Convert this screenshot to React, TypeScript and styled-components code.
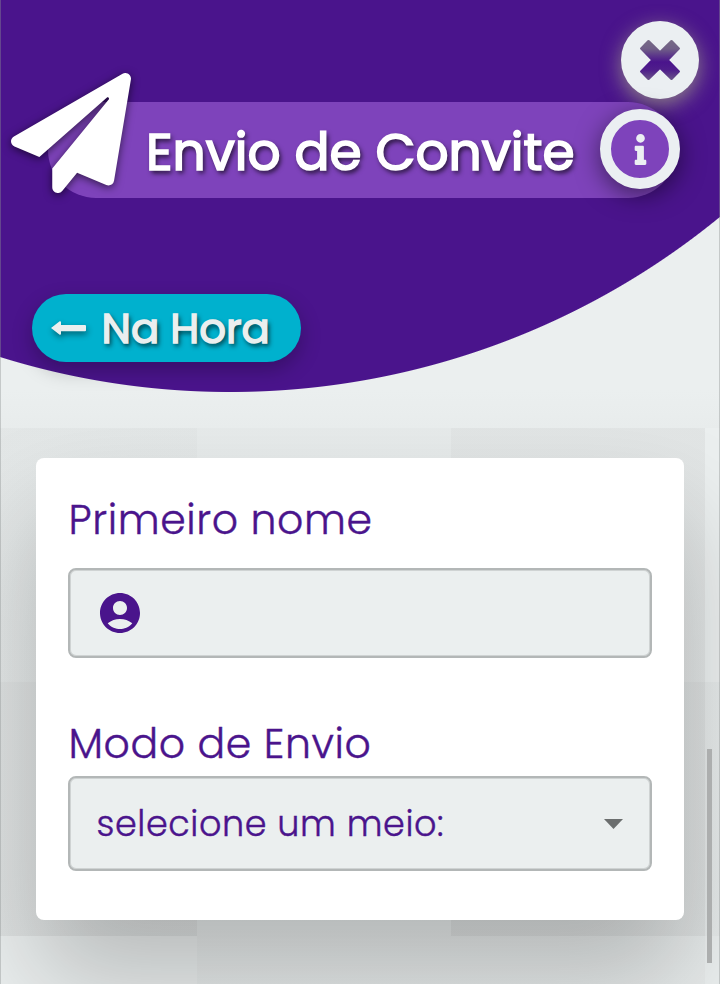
import React from "react";
import styled, { createGlobalStyle } from "styled-components";
import { FaPaperPlane, FaInfo } from "react-icons/fa";
import { MdAccountCircle } from "react-icons/md";

const GlobalStyle = createGlobalStyle`
  * { box-sizing: border-box; }
  html, body { margin: 0; padding: 0; }
  body { background: #ebefef; overflow: hidden; }
`;

const Page = styled.div`
  position: relative;
  display: flex;
  flex-direction: column;
  width: 720px;
  height: 984px;
  overflow: hidden;
  background: #ebefef;
  color: #4a148c;
  font-family: Poppins, Inter, "Open Sans", sans-serif;
`;

const EdgeLines = styled.div`
  position: absolute;
  inset: 0;
  z-index: 2;
  border: solid rgba(140, 145, 145, 0.4);
  border-width: 0 1px;
  pointer-events: none;
`;

const Header = styled.header`
  position: relative;
  z-index: 1;
  flex: none;
  display: flex;
  flex-direction: column;
  height: 428px;
  padding: 21px 21px 0 32px;
  background: radial-gradient(circle at 230px -381px, #4a148c 772.5px, rgba(74, 20, 140, 0) 773.5px),
    linear-gradient(#ebefef 390px, #e8ecec 428px);
`;

const CloseButton = styled.button`
  align-self: flex-end;
  display: grid;
  place-items: center;
  width: 78px;
  height: 78px;
  padding: 0;
  border: 0;
  border-radius: 50%;
  background: #ebeff2;
  box-shadow: 0 6px 20px rgba(165, 165, 135, 0.75);
`;

const TitleBar = styled.div`
  position: relative;
  display: flex;
  align-items: center;
  height: 96px;
  margin: 3px 23px 0 16px;
  border-radius: 48px;
  background: #7e43bb;
`;

const PlaneIcon = styled(FaPaperPlane)`
  flex: none;
  width: 120px;
  height: 120px;
  margin: -35px 1px 0 -37.5px;
  color: #fff;
  filter: drop-shadow(0 2px 4px rgba(0, 0, 0, 0.6));
`;

const Title = styled.h1`
  flex: 1;
  margin: 4px 0 0 14.5px;
  font-size: 51.8px;
  font-weight: 400;
  line-height: 96px;
  white-space: nowrap;
  color: #fff;
  -webkit-text-stroke: 1.7px #fff;
  text-shadow: 2px 3px 5px rgba(0, 0, 0, 0.8);
`;

const InfoButton = styled.button`
  flex: none;
  display: grid;
  place-items: center;
  width: 80px;
  height: 80px;
  margin-top: -2px;
  margin-right: -4px;
  padding: 0;
  border: 11px solid #ebeff2;
  border-radius: 50%;
  background: #7e43bb;
  color: #ebeff2;
  box-shadow: 0 6px 24px rgba(0, 0, 0, 0.5);
`;

const BackButton = styled.button`
  display: flex;
  align-items: center;
  width: 269px;
  height: 68px;
  margin-top: 96px;
  padding: 0 0 0 19px;
  gap: 15.5px;
  border: 0;
  border-radius: 34px;
  background: #00b1ce;
  color: #ebefef;
  font: inherit;
  font-size: 41.8px;
  font-weight: 400;
  line-height: 68px;
  white-space: nowrap;
  -webkit-text-stroke: 1.5px #ebefef;
  text-shadow: 2px 3px 5px rgba(0, 0, 0, 0.8);
  box-shadow: 0 8px 20px rgba(0, 0, 0, 0.26);

  svg { flex: none; filter: drop-shadow(1px 3px 3px rgba(0, 0, 0, 0.45)); }
`;

const BackLabel = styled.span`
  padding-top: 2px;
`;

const Content = styled.main`
  position: relative;
  flex: 1;
  padding: 30px 36px 0;
  overflow: hidden;
  background:
    linear-gradient(rgba(0, 0, 0, 0.02), rgba(0, 0, 0, 0.02)) 0 0 / 197px 508px no-repeat,
    linear-gradient(rgba(0, 0, 0, 0.022), rgba(0, 0, 0, 0.022)) 451px 0 / 254px 508px no-repeat,
    linear-gradient(rgba(0, 0, 0, 0.022), rgba(0, 0, 0, 0.022)) 0 254px / 197px 254px no-repeat,
    linear-gradient(rgba(0, 0, 0, 0.022), rgba(0, 0, 0, 0.022)) 451px 254px / 269px 254px no-repeat,
    linear-gradient(rgba(0, 0, 0, 0.018), rgba(0, 0, 0, 0.018)) 197px 0 / 508px 556px no-repeat,
    linear-gradient(rgba(0, 0, 0, 0.015), rgba(0, 0, 0, 0.015)) 0 0 / 197px 508px no-repeat,
    #ebefef;
`;

const Card = styled.form`
  display: flex;
  flex-direction: column;
  height: 462px;
  padding: 32px;
  border-radius: 8px;
  background: #fff;
  box-shadow: 0 60px 104px rgba(0, 0, 0, 0.22);
`;

const Label = styled.label`
  padding-left: 0.5px;
  font-size: 41px;
  font-weight: 300;
  line-height: 59px;
  height: 60px;
  letter-spacing: 0.6px;
  white-space: nowrap;
  -webkit-text-stroke: 0.4px currentColor;
`;

const Field = styled.div<{ $height: number; $top: number; $bottom: number }>`
  flex: none;
  display: flex;
  align-items: center;
  justify-content: space-between;
  height: ${(p) => p.$height}px;
  margin-top: ${(p) => p.$top}px;
  margin-bottom: ${(p) => p.$bottom}px;
  padding: 0 27px 0 26px;
  border: 2px solid #b3b7b7;
  border-radius: 8px;
  background: #ebefef;
  box-shadow: inset 0 0 0 1px rgba(179, 183, 183, 0.5);
`;

const SelectText = styled.span`
  padding-left: 0.5px;
  font-size: 35px;
  font-weight: 300;
  letter-spacing: 0.6px;
  white-space: nowrap;
  -webkit-text-stroke: 0.4px currentColor;
`;

const ScrollThumb = styled.div`
  position: absolute;
  top: 749px;
  left: 707px;
  z-index: 2;
  width: 5px;
  height: 214px;
  background: #acaeae;
`;

const CloseIcon = () => (
  <svg width="40" height="40" viewBox="0 0 40 40" overflow="visible">
    <defs>
      <linearGradient id="closeShade" gradientUnits="userSpaceOnUse" x1="20" y1="0" x2="20" y2="40">
        <stop offset="0" stopColor="#776b86" />
        <stop offset="0.22" stopColor="#705f87" />
        <stop offset="0.38" stopColor="#5d398a" />
        <stop offset="0.55" stopColor="#4a148c" />
        <stop offset="0.75" stopColor="#4f1e8b" />
        <stop offset="1" stopColor="#6a5488" />
      </linearGradient>
    </defs>
    <path
      d="M8.5 1.2 20 12.4 31.5 1.2 38.8 8.5 27.6 20 38.8 31.5 31.5 38.8 20 27.6 8.5 38.8 1.2 31.5 12.4 20 1.2 8.5Z"
      fill="url(#closeShade)"
      stroke="url(#closeShade)"
      strokeWidth="2.4"
      strokeLinejoin="round"
    />
  </svg>
);

const ArrowIcon = () => (
  <svg width="35" height="14" viewBox="0 0 35 14">
    <path d="M0 7 8.7.3Q10 0 10 1.2V3.9H34Q35 3.9 35 5V9.2Q35 10.2 34 10.2H10V12.8Q10 14 8.7 13.7Z" fill="#ebefef" />
  </svg>
);

const CaretIcon = () => (
  <svg width="19" height="10" viewBox="0 0 19 10">
    <path d="M0 0H19L9.5 10Z" fill="#6b6e6e" />
  </svg>
);

export default function App() {
  return (
    <>
      <GlobalStyle />
      <Page>
        <Header>
          <CloseButton type="button" aria-label="Fechar">
            <CloseIcon />
          </CloseButton>
          <TitleBar>
            <PlaneIcon />
            <Title>Envio de Convite</Title>
            <InfoButton type="button" aria-label="Informações">
              <FaInfo size={31} />
            </InfoButton>
          </TitleBar>
          <BackButton type="button">
            <ArrowIcon />
            <BackLabel>Na Hora</BackLabel>
          </BackButton>
        </Header>
        <Content>
          <Card>
            <Label>Primeiro nome</Label>
            <Field $height={90} $top={18} $bottom={56}>
              <MdAccountCircle size={48} />
            </Field>
            <Label>Modo de Envio</Label>
            <Field $height={95} $top={2} $bottom={0}>
              <SelectText>selecione um meio:</SelectText>
              <CaretIcon />
            </Field>
          </Card>
        </Content>
        <ScrollThumb />
        <EdgeLines />
      </Page>
    </>
  );
}
